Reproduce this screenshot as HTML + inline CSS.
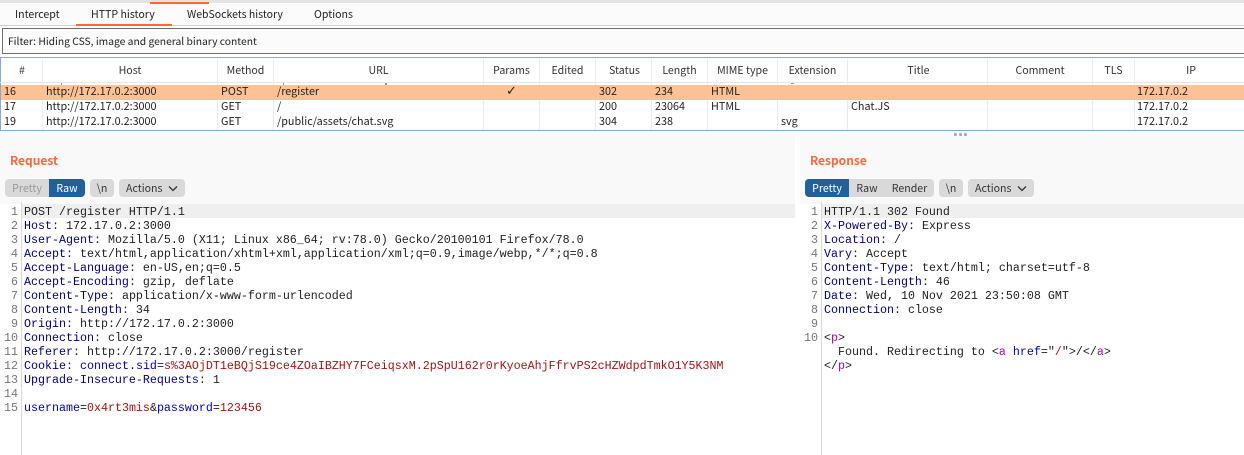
<!DOCTYPE html>
<html><head><meta charset="utf-8">
<style>
html,body{margin:0;padding:0;background:#fff}
#r{position:relative;width:1244px;height:455px;overflow:hidden;background:#fff;font-family:"Noto Sans CJK SC",sans-serif;font-size:10.5px;color:#222}
#r div{position:absolute;white-space:pre}
.t{font-size:10.6px;line-height:14px}
.h{top:64px;text-align:center;font-size:10.6px;line-height:14px;color:#333}
.c{font-size:10.8px;line-height:15px;color:#222}
.m{font-family:"Liberation Mono",monospace;font-size:11.67px;line-height:14px;color:#222}
.n{color:#777;text-align:right;font-family:"Liberation Mono",monospace;font-size:11.67px;line-height:14px}
.b{color:#000080}.u{color:#0000c0}.k{color:#a31515}.p{color:#b000b0}
.btn{background:#d9d9d9;top:179px;height:18px;line-height:20px;text-align:center;font-size:10.6px;color:#333}
.v{top:59px;width:1px;height:71px;background:#ececec}
.q{width:1px;height:2px;top:83px;background:#999}
</style></head><body><div id="r">
<div style="left:0;top:0;width:1244px;height:3px;background:#e4e4e4"></div>
<div style="left:150px;top:2px;width:59px;height:2px;background:#ff6633"></div>
<div style="left:0;top:4px;width:1244px;height:21px;background:#fbfbfb"></div>
<div style="left:0;top:25px;width:1244px;height:1px;background:#d0d0d0"></div>
<div class="t" style="left:15px;top:8px">Intercept</div>
<div class="t" style="left:91px;top:8px">HTTP history</div>
<div class="t" style="left:187px;top:8px;font-size:10.5px">WebSockets history</div>
<div class="t" style="left:314px;top:8px">Options</div>
<div style="left:76px;top:24px;width:96px;height:2px;background:#ff6633"></div>
<div style="left:2px;top:28px;width:1242px;height:24px;border:1px solid #6e6e6e;background:#fbfbfb"></div>
<div class="t" style="left:8px;top:34px;font-size:10.3px">Filter: Hiding CSS, image and general binary content</div>

<div style="left:0;top:57px;width:1244px;height:1px;background:#86aad4"></div>
<div style="left:0;top:130px;width:1244px;height:1px;background:#86aad4"></div>
<div style="left:0;top:57px;width:1px;height:74px;background:#86aad4"></div>
<div style="left:0;top:82px;width:1244px;height:1px;background:#e6e6e6"></div>
<div class="v" style="left:42px"></div>
<div class="v" style="left:217px"></div>
<div class="v" style="left:273px"></div>
<div class="v" style="left:483px"></div>
<div class="v" style="left:539px"></div>
<div class="v" style="left:595px"></div>
<div class="v" style="left:651px"></div>
<div class="v" style="left:707px"></div>
<div class="v" style="left:777px"></div>
<div class="v" style="left:847px"></div>
<div class="v" style="left:987px"></div>
<div class="v" style="left:1092px"></div>
<div class="v" style="left:1134px"></div>
<div style="left:1px;top:85px;width:1243px;height:15px;background:#fcc195"></div>
<div class="q" style="left:61px"></div>
<div class="q" style="left:283px"></div>
<div class="q" style="left:385px;width:2px"></div>
<div class="q" style="left:791px;width:3px;height:1px"></div>

<div class="h" style="left:1px;width:42px">#</div>
<div class="h" style="left:43px;width:174px">Host</div>
<div class="h" style="left:218px;width:55px">Method</div>
<div class="h" style="left:274px;width:209px">URL</div>
<div class="h" style="left:484px;width:55px">Params</div>
<div class="h" style="left:540px;width:55px">Edited</div>
<div class="h" style="left:596px;width:57px">Status</div>
<div class="h" style="left:652px;width:55px">Length</div>
<div class="h" style="left:708px;width:69px">MIME type</div>
<div class="h" style="left:778px;width:69px">Extension</div>
<div class="h" style="left:848px;width:141px">Title</div>
<div class="h" style="left:988px;width:104px">Comment</div>
<div class="h" style="left:1093px;width:41px">TLS</div>
<div class="h" style="left:1135px;width:112px">IP</div>

<div class="c" style="left:4px;top:84px">16</div><div class="c" style="left:46px;top:84px">http://172.17.0.2:3000</div><div class="c" style="left:221px;top:84px">POST</div><div class="c" style="left:277px;top:84px">/register</div><div class="c" style="left:506px;top:84px;font-size:13px;font-family:'DejaVu Sans',sans-serif">✓</div><div class="c" style="left:599px;top:84px">302</div><div class="c" style="left:655px;top:84px">234</div><div class="c" style="left:711px;top:84px">HTML</div><div class="c" style="left:1137px;top:84px">172.17.0.2</div>
<div class="c" style="left:4px;top:99px">17</div><div class="c" style="left:46px;top:99px">http://172.17.0.2:3000</div><div class="c" style="left:221px;top:99px">GET</div><div class="c" style="left:277px;top:99px">/</div><div class="c" style="left:599px;top:99px">200</div><div class="c" style="left:655px;top:99px">23064</div><div class="c" style="left:711px;top:99px">HTML</div><div class="c" style="left:851px;top:99px">Chat.JS</div><div class="c" style="left:1137px;top:99px">172.17.0.2</div>
<div class="c" style="left:4px;top:114px">19</div><div class="c" style="left:46px;top:114px">http://172.17.0.2:3000</div><div class="c" style="left:221px;top:114px">GET</div><div class="c" style="left:277px;top:114px">/public/assets/chat.svg</div><div class="c" style="left:599px;top:114px">304</div><div class="c" style="left:655px;top:114px">238</div><div class="c" style="left:781px;top:114px">svg</div><div class="c" style="left:1137px;top:114px">172.17.0.2</div>

<div style="left:954px;top:133px;width:3px;height:3px;background:#aaa;border-radius:1px"></div>
<div style="left:959px;top:133px;width:3px;height:3px;background:#aaa;border-radius:1px"></div>
<div style="left:964px;top:133px;width:3px;height:3px;background:#aaa;border-radius:1px"></div>

<div style="left:0;top:136px;width:795px;height:68px;background:#f9f9f9"></div>
<div style="left:800px;top:136px;width:444px;height:68px;background:#f9f9f9"></div>
<div style="left:10px;top:153px;font-size:12px;line-height:15px;font-weight:bold;color:#ff6633">Request</div>
<div style="left:810px;top:153px;font-size:12px;line-height:15px;font-weight:bold;color:#ff6633">Response</div>

<div class="btn" style="left:5px;width:44px;border-radius:4px 0 0 4px;color:#999">Pretty</div>
<div class="btn" style="left:49px;width:36px;border-radius:0 4px 4px 0;background:#22609c;color:#fff">Raw</div>
<div class="btn" style="left:90px;width:24px;border-radius:4px">\n</div>
<div class="btn" style="left:119px;width:66px;border-radius:4px;text-align:left;text-indent:7px">Actions</div>
<svg style="position:absolute;left:167px;top:185px" width="12" height="7"><path d="M2 1.5 L6 5.5 L10 1.5" fill="none" stroke="#333" stroke-width="1.3"/></svg>

<div class="btn" style="left:805px;width:44px;border-radius:4px 0 0 4px;background:#22609c;color:#fff">Pretty</div>
<div class="btn" style="left:849px;width:85px;border-radius:0 4px 4px 0"></div>
<div class="btn" style="left:849px;width:36px;background:none">Raw</div>
<div class="btn" style="left:885px;width:49px;background:none">Render</div>
<div class="btn" style="left:939px;width:24px;border-radius:4px">\n</div>
<div class="btn" style="left:968px;width:66px;border-radius:4px;text-align:left;text-indent:7px">Actions</div>
<svg style="position:absolute;left:1016px;top:185px" width="12" height="7"><path d="M2 1.5 L6 5.5 L10 1.5" fill="none" stroke="#333" stroke-width="1.3"/></svg>

<div style="left:22px;top:204px;width:773px;height:14px;background:#efefef"></div>
<div style="left:822px;top:204px;width:422px;height:14px;background:#efefef"></div>
<div style="left:21px;top:202px;width:1px;height:253px;background:#d8d8d8"></div>
<div style="left:821px;top:202px;width:1px;height:253px;background:#d8d8d8"></div>

<div class="n" style="left:0;top:205px;width:18px">1
2
3
4
5
6
7
8
9
10
11
12
13
14
15</div>
<div class="m" style="left:24px;top:205px">POST /register HTTP/1.1
<span class="b">Host</span>: 172.17.0.2:3000
<span class="b">User-Agent</span>: Mozilla/5.0 (X11; Linux x86_64; rv:78.0) Gecko/20100101 Firefox/78.0
<span class="b">Accept</span>: text/html,application/xhtml+xml,application/xml;q=0.9,image/webp,*/*;q=0.8
<span class="b">Accept-Language</span>: en-US,en;q=0.5
<span class="b">Accept-Encoding</span>: gzip, deflate
<span class="b">Content-Type</span>: application/x-www-form-urlencoded
<span class="b">Content-Length</span>: 34
<span class="b">Origin</span>: http://172.17.0.2:3000
<span class="b">Connection</span>: close
<span class="b">Referer</span>: http://172.17.0.2:3000/register
<span class="b">Cookie</span>: <span class="u">connect.sid</span>=<span class="k">s%3AOjDT1eBQjS19ce4ZOaIBZHY7FCeiqsxM.2pSpU162r0rKyoeAhjFfrvPS2cHZWdpdTmkO1Y5K3NM</span>
<span class="b">Upgrade-Insecure-Requests</span>: 1

<span class="u">username</span>=<span class="k">0x4rt3mis</span>&amp;<span class="u">password</span>=<span class="k">123456</span></div>

<div class="n" style="left:800px;top:205px;width:18px">1
2
3
4
5
6
7
8
9
10</div>
<div class="m" style="left:824px;top:205px">HTTP/1.1 302 Found
<span class="b">X-Powered-By</span>: Express
<span class="b">Location</span>: /
<span class="b">Vary</span>: Accept
<span class="b">Content-Type</span>: text/html; charset=utf-8
<span class="b">Content-Length</span>: 46
<span class="b">Date</span>: Wed, 10 Nov 2021 23:50:08 GMT
<span class="b">Connection</span>: close

&lt;<span class="p">p</span>&gt;
  Found. Redirecting to &lt;<span class="p">a</span> <span class="u">href</span>="<span class="k">/</span>"&gt;/&lt;/<span class="p">a</span>&gt;
&lt;/<span class="p">p</span>&gt;</div>
</div></body></html>
